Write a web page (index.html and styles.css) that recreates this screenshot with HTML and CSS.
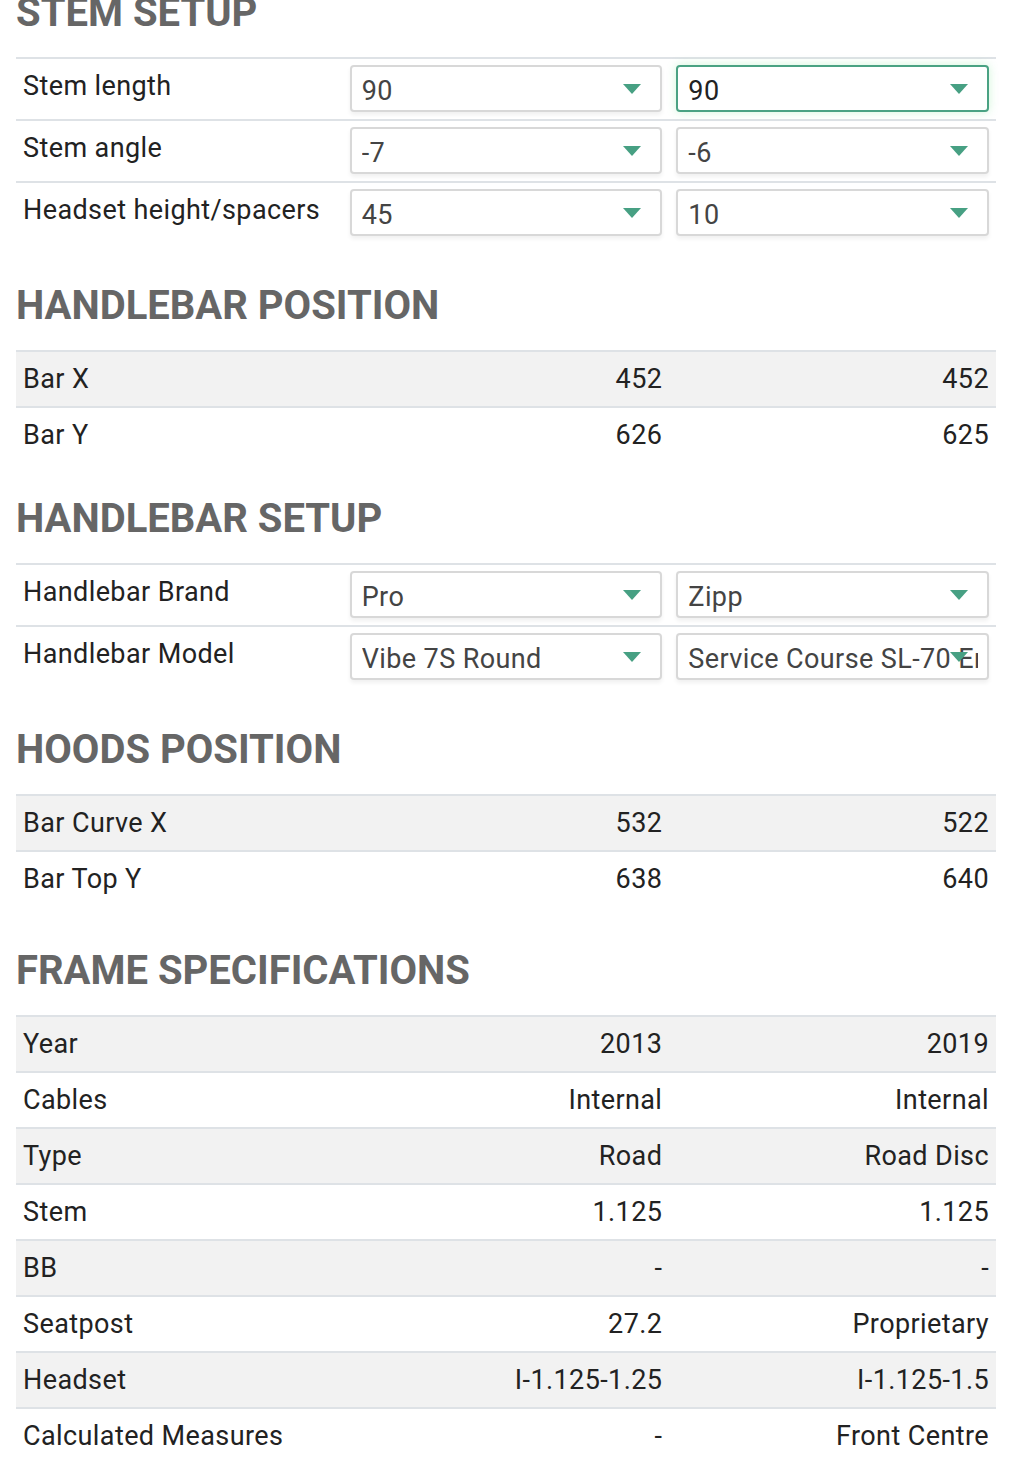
FILE: index.html
```html
<!DOCTYPE html>
<html lang="en">
  <head>
    <meta charset="UTF-8" />
    <meta name="viewport" content="width=device-width, initial-scale=1.0" />
    <title>Bike comparison</title>
    <link rel="stylesheet" href="styles.css">
  </head>
  <body>
    <main class="page">
      <section class="spec">
        <h2 class="spec-title">Stem setup</h2>
        <table class="spec-table spec-table--form">
          <tr>
            <td>Stem length</td>
            <td>
              <div class="select-wrap">
                <select class="select"><option>90</option></select>
              </div>
            </td>
            <td>
              <div class="select-wrap">
                <select class="select is-active"><option>90</option></select>
              </div>
            </td>
          </tr>
          <tr>
            <td>Stem angle</td>
            <td>
              <div class="select-wrap">
                <select class="select"><option>-7</option></select>
              </div>
            </td>
            <td>
              <div class="select-wrap">
                <select class="select"><option>-6</option></select>
              </div>
            </td>
          </tr>
          <tr>
            <td>Headset height/spacers</td>
            <td>
              <div class="select-wrap">
                <select class="select"><option>45</option></select>
              </div>
            </td>
            <td>
              <div class="select-wrap">
                <select class="select"><option>10</option></select>
              </div>
            </td>
          </tr>
        </table>
      </section>

      <section class="spec">
        <h2 class="spec-title">Handlebar position</h2>
        <table class="spec-table spec-table--striped">
          <tr><td>Bar X</td><td class="num">452</td><td class="num">452</td></tr>
          <tr><td>Bar Y</td><td class="num">626</td><td class="num">625</td></tr>
        </table>
      </section>

      <section class="spec">
        <h2 class="spec-title">Handlebar setup</h2>
        <table class="spec-table spec-table--form">
          <tr>
            <td>Handlebar Brand</td>
            <td>
              <div class="select-wrap">
                <select class="select"><option>Pro</option></select>
              </div>
            </td>
            <td>
              <div class="select-wrap">
                <select class="select"><option>Zipp</option></select>
              </div>
            </td>
          </tr>
          <tr>
            <td>Handlebar Model</td>
            <td>
              <div class="select-wrap">
                <select class="select"><option>Vibe 7S Round</option></select>
              </div>
            </td>
            <td>
              <div class="select-wrap">
                <select class="select"><option>Service Course SL-70 Ergo</option></select>
              </div>
            </td>
          </tr>
        </table>
      </section>

      <section class="spec">
        <h2 class="spec-title">Hoods position</h2>
        <table class="spec-table spec-table--striped">
          <tr><td>Bar Curve X</td><td class="num">532</td><td class="num">522</td></tr>
          <tr><td>Bar Top Y</td><td class="num">638</td><td class="num">640</td></tr>
        </table>
      </section>

      <section class="spec spec--wide-gap">
        <h2 class="spec-title">Frame specifications</h2>
        <table class="spec-table spec-table--striped">
          <tr><td>Year</td><td class="num">2013</td><td class="num">2019</td></tr>
          <tr><td>Cables</td><td class="num">Internal</td><td class="num">Internal</td></tr>
          <tr><td>Type</td><td class="num">Road</td><td class="num">Road Disc</td></tr>
          <tr><td>Stem</td><td class="num">1.125</td><td class="num">1.125</td></tr>
          <tr><td>BB</td><td class="num">-</td><td class="num">-</td></tr>
          <tr><td>Seatpost</td><td class="num">27.2</td><td class="num">Proprietary</td></tr>
          <tr><td>Headset</td><td class="num">I-1.125-1.25</td><td class="num">I-1.125-1.5</td></tr>
          <tr><td>Calculated Measures</td><td class="num">-</td><td class="num">Front Centre</td></tr>
        </table>
      </section>
    </main>
  </body>
</html>
```

FILE: styles.css
```css
*,
*::before,
*::after {
  box-sizing: border-box;
}
* {
  margin: 0;
}
body {
  background-color: #fff;
  color: #222;
  font-family: Roboto, "Liberation Sans", sans-serif;
  font-size: 27px;
  line-height: 30px;
  letter-spacing: 0.4px;
}

/* page is scrolled a little, first heading sits under the top edge */
.page {
  margin-top: -10px;
  padding: 0 16px;
}

.spec--wide-gap {
  padding-top: 8px;
}

.spec-title {
  font-size: 40px;
  line-height: 46px;
  font-weight: 700;
  letter-spacing: 0;
  color: #666;
  text-transform: uppercase;
  margin-bottom: 21px;
}

.spec-table {
  width: 100%;
  table-layout: fixed;
  border-collapse: separate;
  border-spacing: 0;
  margin-bottom: 34px;
}

.spec-table td {
  border-top: 2px solid #dee2e6;
  padding: 12px 7px;
  vertical-align: top;
  white-space: nowrap;
}

.spec-table--striped tr:nth-child(odd) td {
  background-color: #f2f2f2;
}

.spec-table--form {
  margin-bottom: 40px;
}

.spec-table--form td + td {
  padding: 6px 7px 7px;
}

.num {
  text-align: right;
}

.select-wrap {
  position: relative;
}

.select-wrap::after {
  content: "";
  position: absolute;
  right: 21px;
  top: 50%;
  margin-top: -5px;
  border-left: 9.5px solid transparent;
  border-right: 9.5px solid transparent;
  border-top: 10px solid #47a083;
  pointer-events: none;
}

.select {
  display: block;
  width: 100%;
  height: 47px;
  padding: 4px 9px 0 10px;
  appearance: none;
  -webkit-appearance: none;
  background-color: #fff;
  border: 2px solid #d8d8d8;
  border-radius: 4px;
  box-shadow: 0 3px 4px rgba(0, 0, 0, 0.06);
  font-family: Roboto, "Liberation Sans", sans-serif;
  font-size: 27px;
  letter-spacing: 0.4px;
  color: #444;
  outline: none;
}

.select.is-active {
  border-color: #4aa283;
  box-shadow: 0 0 10px rgba(90, 220, 120, 0.28);
  color: #222;
}
```
